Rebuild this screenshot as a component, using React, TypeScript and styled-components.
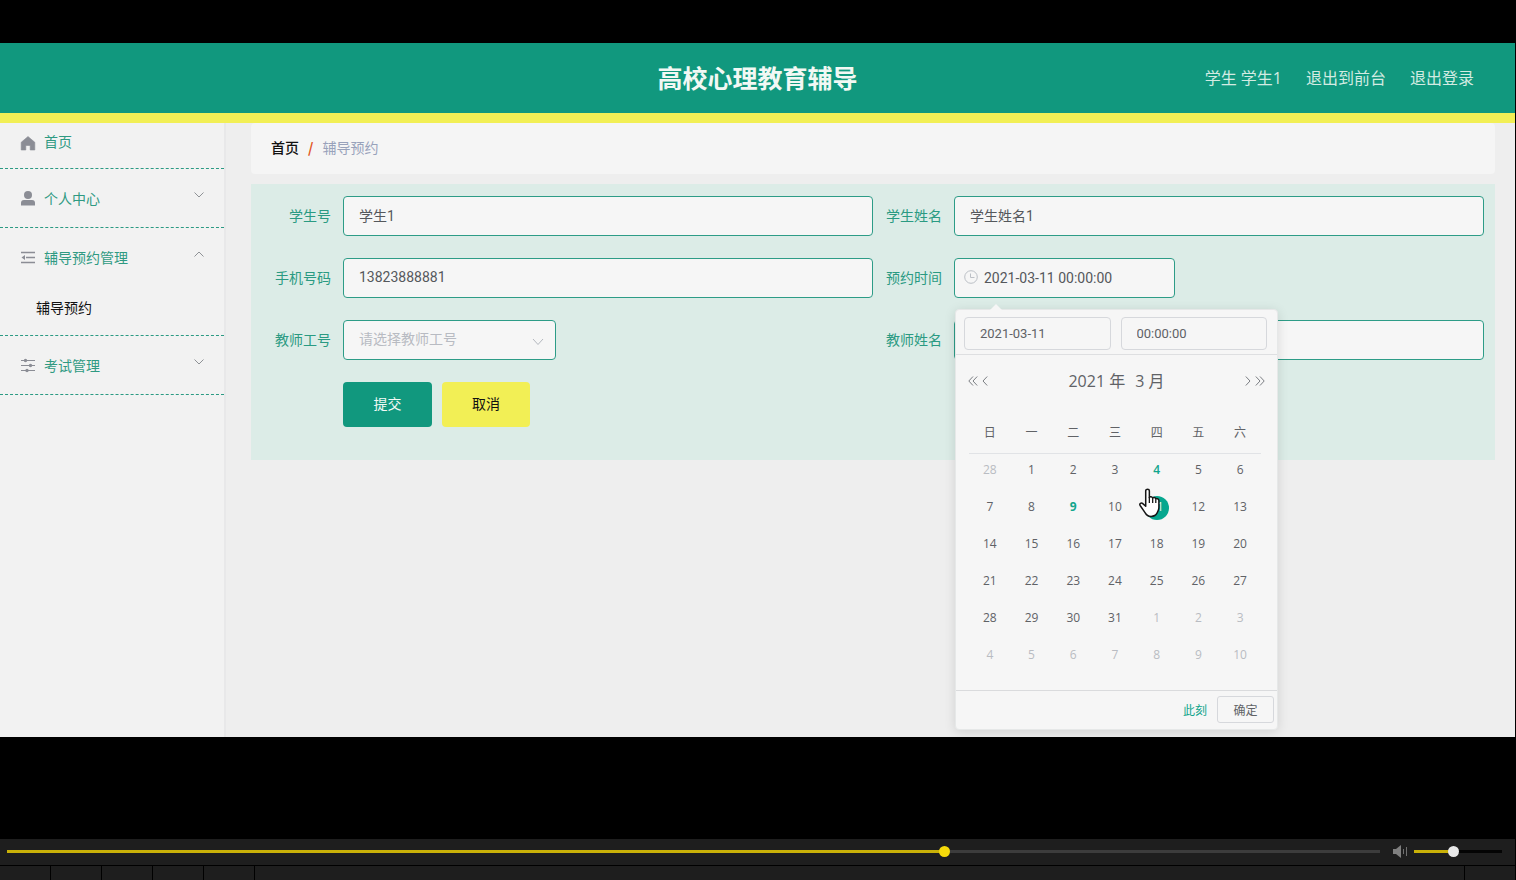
import React from "react";
import styled, { createGlobalStyle, css } from "styled-components";

const teal = "#11987e";
const yellow = "#f2ef55";
const openSans = `"Open Sans", "Noto Sans CJK SC", sans-serif`;
const roboto = `Roboto, "Noto Sans CJK SC", sans-serif`;

const GlobalStyle = createGlobalStyle`
  * { box-sizing: border-box; }
  body { margin: 0; background: #000; }
  body, button, input, select {
    font-family: "Noto Sans CJK SC", "Noto Sans", sans-serif;
    font-size: 14px;
  }
  button { cursor: pointer; padding: 0; border: 0; background: none; color: inherit; }
  a { text-decoration: none; color: inherit; }
`;

const Player = styled.div`
  display: flex;
  flex-direction: column;
  min-height: 100vh;
  background: #000;
`;

const Stage = styled.div`
  flex: 1;
  display: flex;
  flex-direction: column;
  padding: 43px 1px 102px 0;
`;

const Header = styled.header`
  display: grid;
  grid-template-columns: 1fr auto 1fr;
  align-items: center;
  height: 80px;
  padding: 0 41px;
  background: ${teal};
  border-bottom: 10px solid ${yellow};
`;

const Title = styled.h1`
  grid-column: 2;
  margin: 0;
  padding-bottom: 2px;
  font-size: 25px;
  line-height: 36px;
  font-weight: 700;
  color: #f2f8f4;
`;

const HeaderLinks = styled.nav`
  display: flex;
  justify-content: flex-end;
  gap: 24px;
  font-family: ${openSans};
  font-size: 16px;
  line-height: 24px;
  color: #d3ebe2;
`;

const Body = styled.div`
  flex: 1;
  display: flex;
  background: #eee;
`;

const Sidebar = styled.aside`
  flex: none;
  width: 226px;
  background: #f2f2f2;
  border-right: 2px solid #e8e8e9;
`;

const MenuGroup = styled.div`
  border-bottom: 1px dashed #2b9a83;
`;

const MenuButton = styled.button<{ $first?: boolean }>`
  display: flex;
  align-items: center;
  gap: 8px;
  width: 100%;
  height: ${(p) => (p.$first ? 45 : 58)}px;
  padding: 0 20px ${(p) => (p.$first ? 6 : 0)}px;
  color: #2f9a82;
  line-height: 20px;
  text-align: left;
`;

const MenuIcon = styled.svg`
  flex: none;
  width: 16px;
  height: 16px;
  color: #8b8d95;
`;

const MenuLabel = styled.span<{ $raised?: boolean }>`
  flex: 1;
  padding-bottom: ${(p) => (p.$raised ? 4 : 0)}px;
`;

const Chevron = styled.svg<{ $up?: boolean }>`
  flex: none;
  width: 10px;
  height: 6px;
  margin-bottom: 6px;
  fill: none;
  stroke: #8f9296;
  ${(p) => p.$up && css`transform: rotate(180deg);`}
`;

const SubLink = styled.a`
  display: block;
  height: 49px;
  padding-left: 36px;
  line-height: 42px;
  color: #111;
`;

const Main = styled.main`
  flex: 1;
  min-width: 0;
  padding: 0 20px 0 25px;
`;

const Breadcrumb = styled.nav`
  display: flex;
  align-items: center;
  gap: 9px;
  height: 51px;
  padding: 0 20px 4px;
  background: #f5f5f5;
  border-radius: 4px;
  color: #98a2bb;
`;

const Home = styled.a`
  font-weight: 500;
  color: #111;
`;

const Slash = styled.span`
  font-weight: 700;
  color: #e2571f;
`;

const Form = styled.form`
  display: grid;
  grid-template-columns: 1fr 1fr;
  row-gap: 22px;
  margin-top: 10px;
  padding: 12px 11px 33px;
  background: #dcece7;
`;

const Field = styled.div`
  display: flex;
  min-width: 0;
`;

const Label = styled.label`
  flex: none;
  width: 81px;
  padding-right: 12px;
  line-height: 38px;
  text-align: right;
  color: #2a9a82;
`;

const control = css`
  height: 40px;
  padding: 0 15px 2px;
  border: 1px solid #2d9c87;
  border-radius: 4px;
  background: #f6f6f6;
  color: #55585c;
  font-family: ${roboto};
  outline: none;
`;

const TextInput = styled.input`
  ${control}
  flex: 1;
  min-width: 0;
`;

const SelectBox = styled.div`
  position: relative;
  width: 213px;
`;

const Select = styled.select`
  ${control}
  appearance: none;
  width: 100%;
  color: #b8bbc2;
`;

const SelectArrow = styled.svg`
  position: absolute;
  right: 12px;
  top: 18px;
  width: 12px;
  height: 8px;
  fill: none;
  stroke: #b4b8bf;
  pointer-events: none;
`;

const DateBox = styled.div`
  position: relative;
  width: 221px;
`;

const DateInput = styled.input`
  ${control}
  width: 100%;
  padding: 0 29px 1px;
`;

const Clock = styled.svg`
  position: absolute;
  left: 10px;
  top: 12px;
  width: 14px;
  height: 14px;
  fill: none;
  stroke: #bcc0c6;
`;

const Actions = styled.div`
  display: flex;
  gap: 10px;
  padding-left: 81px;
`;

const ActionButton = styled.button<{ $primary?: boolean }>`
  width: ${(p) => (p.$primary ? 89 : 88)}px;
  height: 45px;
  padding-bottom: 4px;
  border-radius: 4px;
  background: ${(p) => (p.$primary ? teal : yellow)};
  color: ${(p) => (p.$primary ? "#f4faf6" : "#111")};
`;

const Popup = styled.div`
  position: absolute;
  z-index: 2;
  top: 51px;
  left: 1px;
  width: 323px;
  border: 1px solid #e6e8e8;
  border-radius: 4px;
  background: #f6f6f6;
  box-shadow: 0 2px 12px rgba(0, 0, 0, 0.12);
  color: #606266;

  &::before {
    content: "";
    position: absolute;
    left: 34px;
    top: -6px;
    border: 6px solid transparent;
    border-top: 0;
    border-bottom-color: #f6f6f6;
  }
`;

const PopupTop = styled.div`
  display: flex;
  gap: 10px;
  height: 45px;
  padding: 7px 10px 0 8px;
  border-bottom: 1px solid #dedfe1;
`;

const SmallInput = styled.input`
  flex: 1;
  min-width: 0;
  height: 33px;
  padding: 0 15px;
  border: 1px solid #d6d8dc;
  border-radius: 4px;
  background: #f6f6f6;
  color: #606266;
  font-family: ${roboto};
  font-size: 13px;
`;

const MonthBar = styled.div`
  display: flex;
  align-items: center;
  justify-content: space-between;
  height: 52px;
  padding: 0 12px;
  font-family: ${openSans};
  font-size: 16px;
  line-height: 24px;
`;

const MonthNav = styled.div`
  display: flex;
  gap: 4px;
`;

const NavButton = styled.button`
  display: flex;
`;

const NavIcon = styled.svg`
  height: 10px;
  fill: none;
  stroke: #7b7e83;
`;

const MonthText = styled.div`
  display: flex;
  gap: 10px;
`;

const Days = styled.table`
  width: 292px;
  margin: 6px 13px 14px;
  border-collapse: collapse;
  table-layout: fixed;
  font-size: 12px;
  line-height: 16px;
  text-align: center;

  th {
    height: 40px;
    padding: 0 0 2px;
    font-weight: 400;
    border-bottom: 1px solid #e1e3e6;
  }
  td {
    height: 37px;
    padding: 5px 0 8px;
    line-height: 22px;
    vertical-align: top;
  }
`;

type Tone = "muted" | "normal" | "accent" | "today" | "selected";

const tones = {
  muted: css`color: #b9bcc2;`,
  normal: css`color: #606266;`,
  accent: css`color: #12a58c; font-weight: 600;`,
  today: css`color: #12a58c; font-weight: 700;`,
  selected: css`color: #e8f6f2; background: #06a78f;`,
};

const Day = styled.button<{ $tone: Tone }>`
  position: relative;
  display: block;
  width: 24px;
  height: 24px;
  margin: 0 auto;
  padding-bottom: 2px;
  border-radius: 12px;
  font-family: ${openSans};
  font-size: 12px;
  line-height: 22px;
  ${(p) => tones[p.$tone]}
`;

const Pointer = styled.svg`
  position: absolute;
  left: -7px;
  top: -8px;
  width: 24px;
  height: 30px;
`;

const PopupFoot = styled.div`
  display: flex;
  justify-content: flex-end;
  align-items: center;
  gap: 10px;
  height: 39px;
  padding: 0 3px;
  border-top: 1px solid #dadbdd;
`;

const NowButton = styled.button`
  font-size: 12px;
  color: #12a58c;
`;

const OkButton = styled.button`
  width: 57px;
  height: 27px;
  border: 1px solid #d6d8dc;
  border-radius: 3px;
  font-size: 12px;
`;

const PlayerBar = styled.div`
  display: flex;
  align-items: center;
  height: 26px;
  padding: 0 13px 1px 7px;
  border-right: 1px solid #000;
  background: #1e1e1e;
`;

const Range = styled.input<{ $fill: number; $rest: string; $thumb: string; $size: number }>`
  appearance: none;
  height: 11px;
  margin: 0;
  background: none;

  &::-webkit-slider-runnable-track {
    height: 3px;
    background: linear-gradient(to right, #c9b108 ${(p) => p.$fill}%, ${(p) => p.$rest} ${(p) => p.$fill}%);
  }
  &::-webkit-slider-thumb {
    appearance: none;
    width: ${(p) => p.$size}px;
    height: ${(p) => p.$size}px;
    margin-top: ${(p) => (3 - p.$size) / 2}px;
    border-radius: 50%;
    background: ${(p) => p.$thumb};
  }
`;

const Seek = styled(Range)`
  flex: 1;
  min-width: 0;
`;

const Volume = styled(Range)`
  width: 88px;
`;

const Mute = styled.button`
  display: flex;
  margin: 0 6px 0 13px;
`;

const Strip = styled.div`
  display: flex;
  gap: 1px;
  height: 14px;
  margin-top: 1px;
  padding-right: 1px;
`;

const StripCell = styled.div<{ $grow?: boolean }>`
  flex: ${(p) => (p.$grow ? "1" : "none")};
  width: 50px;
  background: #1e1e1e;
`;

const weekdays = ["日", "一", "二", "三", "四", "五", "六"];

const weeks: number[][] = [
  [28, 1, 2, 3, 4, 5, 6],
  [7, 8, 9, 10, 11, 12, 13],
  [14, 15, 16, 17, 18, 19, 20],
  [21, 22, 23, 24, 25, 26, 27],
  [28, 29, 30, 31, 1, 2, 3],
  [4, 5, 6, 7, 8, 9, 10],
];

function toneOf(week: number, day: number): Tone {
  if ((week === 0 && day > 20) || (week > 3 && day < 20)) return "muted";
  if (week === 0 && day === 4) return "accent";
  if (day === 9) return "today";
  if (day === 11) return "selected";
  return "normal";
}

function MenuChevron({ up }: { up?: boolean }) {
  return (
    <Chevron $up={up} viewBox="0 0 10 6">
      <path d="M0.5 0.5 5 5 9.5 0.5" />
    </Chevron>
  );
}

function HandPointer() {
  return (
    <Pointer viewBox="0 0 22 28">
      <path
        d="M7 2.5C7 .8 10.400.8 10.400 2.500V9c.3-1.200 2.900-1 3.100.5.5-1 2.800-.8 2.900.8.7-.8 2.900-.4 2.900 1.400V18c0 2.800-1.100 4-1.800 5.500C16.600 25.500 14.500 26.500 12 26.500c-3 0-4.500-1.400-5.500-3.300L1.800 16.300c-1-1.600 1-3.200 2.500-1.700L7 17Z"
        fill="#fff"
        stroke="#151515"
        strokeWidth="1.400"
        strokeLinejoin="round"
      />
      <path d="M10.400 8.500V14M13.500 9.500V14M16.400 10.500V14" stroke="#151515" strokeWidth="1.200" fill="none" />
    </Pointer>
  );
}

function Calendar() {
  return (
    <Popup>
      <PopupTop>
        <SmallInput aria-label="日期" defaultValue="2021-03-11" />
        <SmallInput aria-label="时间" defaultValue="00:00:00" />
      </PopupTop>
      <MonthBar>
        <MonthNav>
          <NavButton type="button" aria-label="前一年">
            <NavIcon width="10" viewBox="0 0 10 10"><path d="M5 .5.8 5 5 9.500M9.200.5 5 5l4.200 4.500" /></NavIcon>
          </NavButton>
          <NavButton type="button" aria-label="上个月">
            <NavIcon width="6" viewBox="0 0 6 10"><path d="M5.200.5 1 5l4.200 4.500" /></NavIcon>
          </NavButton>
        </MonthNav>
        <MonthText><span>2021 年</span><span>3 月</span></MonthText>
        <MonthNav>
          <NavButton type="button" aria-label="下个月">
            <NavIcon width="6" viewBox="0 0 6 10"><path d="M.8.5 5 5 .8 9.500" /></NavIcon>
          </NavButton>
          <NavButton type="button" aria-label="后一年">
            <NavIcon width="10" viewBox="0 0 10 10"><path d="M.8.5 5 5 .8 9.500M5 .5 9.200 5 5 9.500" /></NavIcon>
          </NavButton>
        </MonthNav>
      </MonthBar>
      <Days>
        <thead>
          <tr>{weekdays.map((d) => <th key={d} scope="col">{d}</th>)}</tr>
        </thead>
        <tbody>
          {weeks.map((week, w) => (
            <tr key={w}>
              {week.map((d) => {
                const tone = toneOf(w, d);
                return (
                  <td key={d}>
                    <Day type="button" $tone={tone}>
                      {d}
                      {tone === "selected" && <HandPointer />}
                    </Day>
                  </td>
                );
              })}
            </tr>
          ))}
        </tbody>
      </Days>
      <PopupFoot>
        <NowButton type="button">此刻</NowButton>
        <OkButton type="button">确定</OkButton>
      </PopupFoot>
    </Popup>
  );
}

export default function App() {
  return (
    <>
      <GlobalStyle />
      <Player>
        <Stage>
          <Header>
            <Title>高校心理教育辅导</Title>
            <HeaderLinks>
              <span>学生 学生1</span>
              <a href="#front">退出到前台</a>
              <a href="#logout">退出登录</a>
            </HeaderLinks>
          </Header>
          <Body>
            <Sidebar>
              <MenuGroup>
                <MenuButton $first>
                  <MenuIcon viewBox="0 0 16 16">
                    <path d="M8 1.500 1.200 7.300V15h4.600v-4.500h4.400V15h4.600V7.300Z" fill="currentColor" stroke="currentColor" strokeWidth=".6" strokeLinejoin="round" />
                  </MenuIcon>
                  <MenuLabel $raised>首页</MenuLabel>
                </MenuButton>
              </MenuGroup>
              <MenuGroup>
                <MenuButton>
                  <MenuIcon viewBox="0 0 16 16">
                    <circle cx="8" cy="5" r="4" fill="currentColor" />
                    <path d="M1 15.500v-2.500A3 3 0 0 1 4 10h8a3 3 0 0 1 3 3v2.500Z" fill="currentColor" />
                  </MenuIcon>
                  <MenuLabel>个人中心</MenuLabel>
                  <MenuChevron />
                </MenuButton>
              </MenuGroup>
              <MenuGroup>
                <MenuButton>
                  <MenuIcon viewBox="0 0 16 16">
                    <path d="M1 3.500h14M6 8.500h9M1 13.500h14" stroke="currentColor" strokeWidth="1.600" />
                    <path d="M5 6v5L1.500 8.500Z" fill="currentColor" />
                  </MenuIcon>
                  <MenuLabel>辅导预约管理</MenuLabel>
                  <MenuChevron up />
                </MenuButton>
                <SubLink href="#booking">辅导预约</SubLink>
              </MenuGroup>
              <MenuGroup>
                <MenuButton>
                  <MenuIcon viewBox="0 0 16 16">
                    <path d="M1 3.500h14M1 8.500h14M1 13.500h14" stroke="currentColor" strokeWidth="1.200" />
                    <circle cx="5.500" cy="3.500" r="1.700" fill="currentColor" />
                    <circle cx="10.500" cy="8.500" r="1.700" fill="currentColor" />
                    <circle cx="7" cy="13.500" r="1.700" fill="currentColor" />
                  </MenuIcon>
                  <MenuLabel>考试管理</MenuLabel>
                  <MenuChevron />
                </MenuButton>
              </MenuGroup>
            </Sidebar>
            <Main>
              <Breadcrumb>
                <Home href="#home">首页</Home>
                <Slash>/</Slash>
                <span>辅导预约</span>
              </Breadcrumb>
              <Form>
                <Field>
                  <Label htmlFor="sid">学生号</Label>
                  <TextInput id="sid" defaultValue="学生1" />
                </Field>
                <Field>
                  <Label htmlFor="sname">学生姓名</Label>
                  <TextInput id="sname" defaultValue="学生姓名1" />
                </Field>
                <Field>
                  <Label htmlFor="phone">手机号码</Label>
                  <TextInput id="phone" defaultValue="13823888881" />
                </Field>
                <Field>
                  <Label htmlFor="time">预约时间</Label>
                  <DateBox>
                    <DateInput id="time" defaultValue="2021-03-11 00:00:00" />
                    <Clock viewBox="0 0 14 14">
                      <circle cx="7" cy="7" r="6.300" />
                      <path d="M6.500 3.500v4h4" />
                    </Clock>
                    <Calendar />
                  </DateBox>
                </Field>
                <Field>
                  <Label htmlFor="tid">教师工号</Label>
                  <SelectBox>
                    <Select id="tid" defaultValue="">
                      <option value="">请选择教师工号</option>
                    </Select>
                    <SelectArrow viewBox="0 0 12 8">
                      <path d="M1 1l5 5.500L11 1" />
                    </SelectArrow>
                  </SelectBox>
                </Field>
                <Field>
                  <Label htmlFor="tname">教师姓名</Label>
                  <TextInput id="tname" />
                </Field>
                <Actions>
                  <ActionButton type="button" $primary>提交</ActionButton>
                  <ActionButton type="button">取消</ActionButton>
                </Actions>
              </Form>
            </Main>
          </Body>
        </Stage>
        <PlayerBar>
          <Seek type="range" aria-label="播放进度" min={0} max={1000} defaultValue={684} $fill={68} $rest="#3c3c3c" $thumb="#f5d90a" $size={11} />
          <Mute type="button" aria-label="音量">
            <svg width="15" height="13" viewBox="0 0 15 13">
              <path d="M0 4h3l5-4v13L3 9H0Z" fill="#808080" />
              <path d="M10.500 4v5M13.500 2v9" stroke="#707070" />
            </svg>
          </Mute>
          <Volume type="range" aria-label="音量大小" min={0} max={100} defaultValue={44} $fill={44} $rest="#040404" $thumb="#e8e8e8" $size={11} />
        </PlayerBar>
        <Strip>
          <StripCell />
          <StripCell />
          <StripCell />
          <StripCell />
          <StripCell />
          <StripCell $grow />
          <StripCell />
        </Strip>
      </Player>
    </>
  );
}
